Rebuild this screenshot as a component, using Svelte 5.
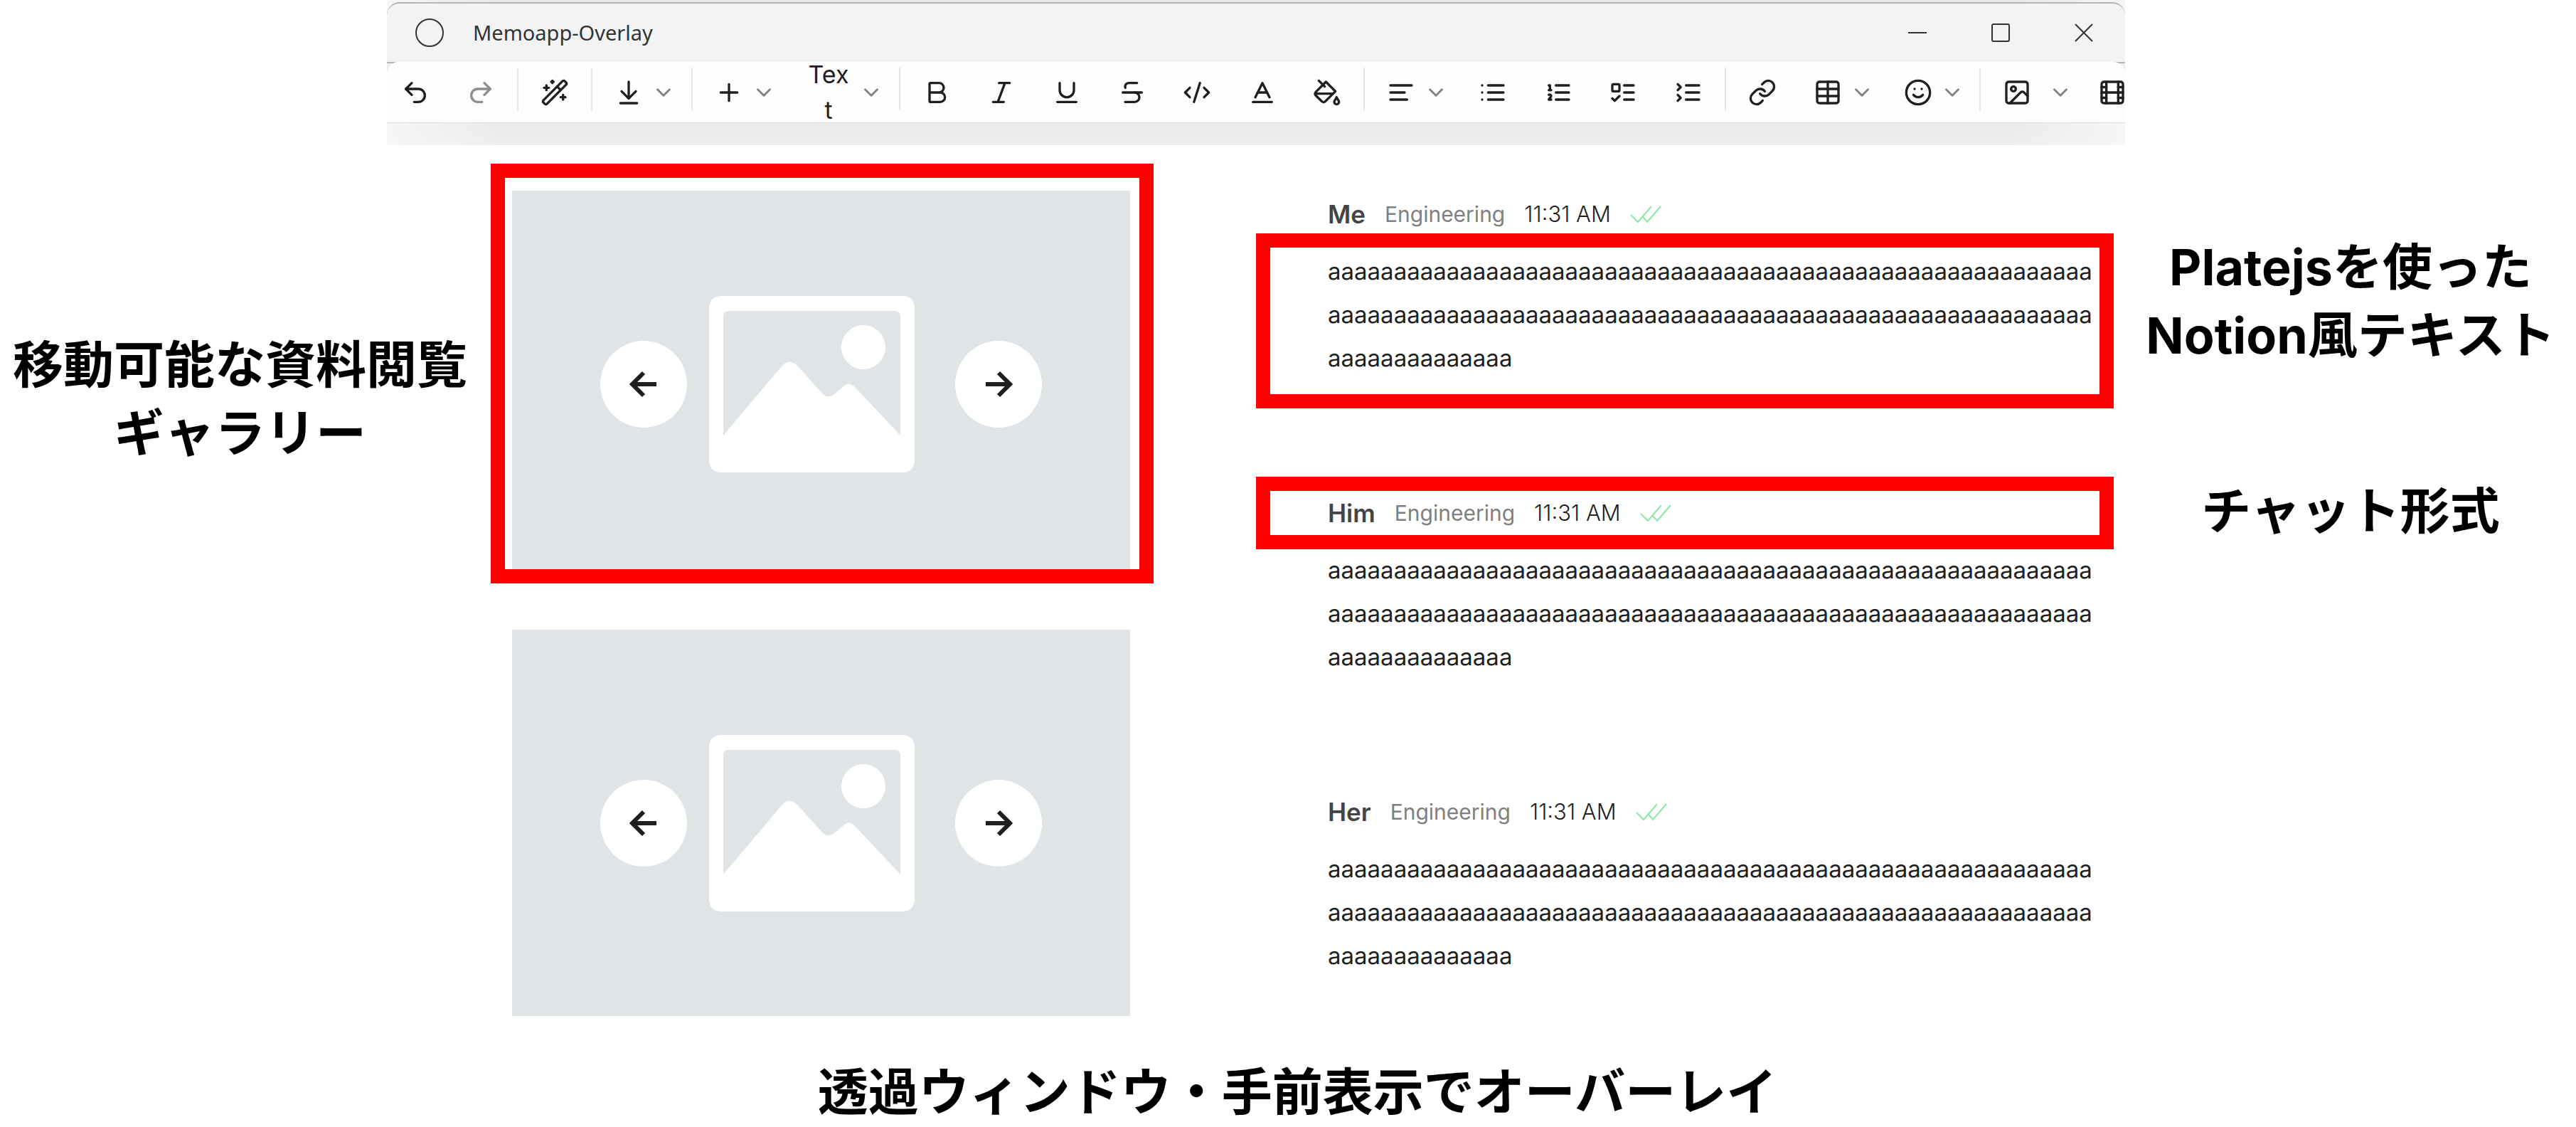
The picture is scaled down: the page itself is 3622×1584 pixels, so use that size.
<script>
  const icons = {
    undo: ['M9 14 4 9l5-5', 'M4 9h10.5a5.5 5.5 0 0 1 0 11H11'],
    redo: ['m15 14 5-5-5-5', 'M20 9H9.5a5.5 5.5 0 0 0 0 11H13'],
    wand: [
      'm21.64 3.64-1.28-1.28a1.21 1.21 0 0 0-1.72 0L2.36 18.64a1.21 1.21 0 0 0 0 1.72l1.28 1.28a1.2 1.2 0 0 0 1.72 0L21.64 5.36a1.2 1.2 0 0 0 0-1.72',
      'm14 7 3 3', 'M5 6v4', 'M19 14v4', 'M10 2v2', 'M7 8H3', 'M21 16h-4', 'M11 3H9'
    ],
    download: ['M12 17V3', 'm6 11 6 6 6-6', 'M19 21H5'],
    plus: ['M5 12h14', 'M12 5v14'],
    chevron: ['m6 9 6 6 6-6'],
    bold: ['M6 12h9a4 4 0 0 1 0 8H7a1 1 0 0 1-1-1V5a1 1 0 0 1 1-1h7a4 4 0 0 1 0 8'],
    italic: ['M19 4h-9', 'M14 20H5', 'M15 4 9 20'],
    underline: ['M6 4v6a6 6 0 0 0 12 0V4', 'M4 20h16'],
    strike: ['M16 4H9a3 3 0 0 0-2.83 4', 'M14 12a4 4 0 0 1 0 8H6', 'M4 12h16'],
    code: ['m18 16 4-4-4-4', 'm6 8-4 4 4 4', 'm14.5 4-5 16'],
    color: ['M4 20h16', 'm6 16 6-12 6 12', 'M8 12h8'],
    bucket: [
      'm19 11-8-8-8.6 8.6a2 2 0 0 0 0 2.8l5.2 5.2c.8.8 2 .8 2.8 0L19 11Z',
      'm5 2 5 5', 'M2 13h15', 'M22 20a2 2 0 1 1-4 0c0-1.6 1.7-2.4 2-4 .3 1.6 2 2.4 2 4Z'
    ],
    align: ['M21 6H3', 'M15 12H3', 'M17 18H3'],
    bullets: ['M8 6h13', 'M8 12h13', 'M8 18h13', 'M3 6h.01', 'M3 12h.01', 'M3 18h.01'],
    numbers: ['M10 6h11', 'M10 12h11', 'M10 18h11', 'M4 6h1v4', 'M4 10h2', 'M6 18H4c0-1 2-2 2-3s-1-1.5-2-1'],
    todo: ['M4 5h4a1 1 0 0 1 1 1v4a1 1 0 0 1-1 1H4a1 1 0 0 1-1-1V6a1 1 0 0 1 1-1Z', 'm3 17 2 2 4-4', 'M13 6h8', 'M13 12h8', 'M13 18h8'],
    toggle: ['m3 10 2.5-2.5L3 5', 'm3 19 2.5-2.5L3 14', 'M10 6h11', 'M10 12h11', 'M10 18h11'],
    link: [
      'M10 13a5 5 0 0 0 7.54.54l3-3a5 5 0 0 0-7.07-7.07l-1.72 1.71',
      'M14 11a5 5 0 0 0-7.54-.54l-3 3a5 5 0 0 0 7.07 7.07l1.71-1.71'
    ],
    table: ['M5 3h14a2 2 0 0 1 2 2v14a2 2 0 0 1-2 2H5a2 2 0 0 1-2-2V5a2 2 0 0 1 2-2Z', 'M12 3v18', 'M3 9h18', 'M3 15h18'],
    emoji: ['M22 12a10 10 0 1 1-20 0a10 10 0 1 1 20 0Z', 'M8 14s1.5 2 4 2 4-2 4-2', 'M9 9h.01', 'M15 9h.01'],
    image: [
      'M5 3h14a2 2 0 0 1 2 2v14a2 2 0 0 1-2 2H5a2 2 0 0 1-2-2V5a2 2 0 0 1 2-2Z',
      'M11 9a2 2 0 1 1-4 0a2 2 0 1 1 4 0Z', 'm21 15-3.086-3.086a2 2 0 0 0-2.828 0L6 21'
    ],
    film: [
      'M5 3h14a2 2 0 0 1 2 2v14a2 2 0 0 1-2 2H5a2 2 0 0 1-2-2V5a2 2 0 0 1 2-2Z',
      'M7 3v18', 'M3 7.5h4', 'M3 12h18', 'M3 16.5h4', 'M17 3v18', 'M17 7.5h4', 'M17 16.5h4'
    ]
  };

  const marks = [
    ['bold', 'Bold'], ['italic', 'Italic'], ['underline', 'Underline'], ['strike', 'Strikethrough'],
    ['code', 'Code'], ['color', 'Text color'], ['bucket', 'Background color']
  ];
  const lists = [
    ['bullets', 'Bulleted list'], ['numbers', 'Numbered list'], ['todo', 'To-do list'], ['toggle', 'Toggle list']
  ];

  const body = 'a'.repeat(130);
  const messages = [
    { name: 'Me', team: 'Engineering', time: '11:31 AM', body, mark: 'text' },
    { name: 'Him', team: 'Engineering', time: '11:31 AM', body, mark: 'head' },
    { name: 'Her', team: 'Engineering', time: '11:31 AM', body, mark: '' }
  ];
  const slides = [{ marked: true }, { marked: false }];
</script>

{#snippet icon(name)}
  <svg class="icon" class:small={name === 'chevron'} viewBox="0 0 24 24" aria-hidden="true">
    {#each icons[name] as d}<path {d} />{/each}
  </svg>
{/snippet}

{#snippet split(name, label)}
  <div class="split">
    <button aria-label={label}>{@render icon(name)}</button>
    <button class="more" aria-label="{label} options">{@render icon('chevron')}</button>
  </div>
{/snippet}

<div class="page">
  <h2 class="caption left">移動可能な資料閲覧<br />ギャラリー</h2>

  <div class="window">
    <div class="chrome">
      <header class="titlebar">
        <svg class="logo" viewBox="0 0 42 42" aria-hidden="true"><circle cx="21" cy="21" r="19" /></svg>
        <h1>Memoapp-Overlay</h1>
        <div class="controls">
          <button aria-label="Minimize"><svg viewBox="0 0 26 26"><path d="M0 13h26" /></svg></button>
          <button aria-label="Maximize"><svg viewBox="0 0 26 26"><rect x="1" y="1" width="24" height="24" rx="2" /></svg></button>
          <button aria-label="Close"><svg viewBox="0 0 26 26"><path d="M1 1l24 24M25 1 1 25" /></svg></button>
        </div>
      </header>

      <div class="toolbar-wrap">
        <div class="toolbar" role="toolbar" aria-label="Formatting">
          <div class="group history">
            <button class="tool" aria-label="Undo">{@render icon('undo')}</button>
            <button class="tool" aria-label="Redo" disabled>{@render icon('redo')}</button>
          </div>
          <div class="group">
            <button class="tool" aria-label="AI commands">{@render icon('wand')}</button>
          </div>
          <div class="group">{@render split('download', 'Export')}</div>
          <div class="group">
            {@render split('plus', 'Insert')}
            <button class="split block" aria-label="Text">
              <span>Text</span>
              <span class="more">{@render icon('chevron')}</span>
            </button>
          </div>
          <div class="group marks">
            {#each marks as [name, label]}
              <button class="tool" aria-label={label}>{@render icon(name)}</button>
            {/each}
          </div>
          <div class="group">
            {@render split('align', 'Align')}
            <div class="lists">
              {#each lists as [name, label]}
                <button class="tool" aria-label={label}>{@render icon(name)}</button>
              {/each}
            </div>
          </div>
          <div class="group tight">
            <button class="tool" aria-label="Link">{@render icon('link')}</button>
            {@render split('table', 'Table')}
            {@render split('emoji', 'Emoji')}
          </div>
          <div class="group media">
            {@render split('image', 'Image')}
            <button class="tool" aria-label="Video">{@render icon('film')}</button>
          </div>
        </div>
      </div>
    </div>

    <main class="content">
      <section class="gallery" aria-label="Gallery">
        {#each slides as slide}
          <div class="slide" class:marked={slide.marked}>
            <button class="nav" aria-label="Previous">
              <svg viewBox="0 0 40 40"><path d="M38 20H5M20 4 4 20l16 16" /></svg>
            </button>
            <svg class="picture" viewBox="0 0 289 248" aria-hidden="true">
              <path
                class="frame"
                fill-rule="evenodd"
                d="M18 0H271Q289 0 289 18V230Q289 248 271 248H18Q0 248 0 230V18Q0 0 18 0ZM28 21Q20 21 20 29V196L102 99Q113 86 125 99L159 137Q168 145 176 138L188 128Q196 119 205 128L269 196V29Q269 21 261 21Z"
              />
              <circle class="frame" cx="217" cy="72" r="31" />
            </svg>
            <button class="nav next" aria-label="Next">
              <svg viewBox="0 0 40 40"><path d="M2 20h33M20 4l16 16-16 16" /></svg>
            </button>
          </div>
        {/each}
      </section>

      <section class="chat" aria-label="Chat">
        {#each messages as message}
          <article>
            <div class="head" class:marked={message.mark === 'head'}>
              <strong>{message.name}</strong>
              <span class="team">{message.team}</span>
              <time>{message.time}</time>
              <svg class="read" viewBox="0 0 44 24" aria-hidden="true">
                <path d="M1 13l10 10L30 1M18 16l6 7L43 1" />
              </svg>
            </div>
            <p class:marked={message.mark === 'text'}>{message.body}</p>
          </article>
        {/each}
      </section>
    </main>
  </div>

  <div class="notes">
    <h2 class="caption">Platejsを使った<br />Notion風テキスト</h2>
    <h2 class="caption">チャット形式</h2>
  </div>

  <h2 class="caption bottom">透過ウィンドウ・手前表示でオーバーレイ</h2>
</div>

<style>
  :global(body) {
    background: #fff;
  }

  .page {
    display: grid;
    grid-template-columns: minmax(0, 544fr) minmax(0, 2444fr) minmax(0, 634fr);
    font-family: Inter, 'Noto Sans CJK JP', sans-serif;
    color: #1f1f1f;
  }

  h1,
  h2,
  p {
    margin: 0;
    font-weight: 400;
  }

  button {
    display: flex;
    align-items: center;
    justify-content: center;
    padding: 0;
    border: 0;
    background: none;
    color: inherit;
    font: inherit;
  }

  .caption {
    color: #000;
    font-size: 71px;
    font-weight: 700;
    line-height: 96px;
    text-align: center;
    white-space: nowrap;
  }

  .caption.left {
    justify-self: start;
    padding: 464px 0 0 18px;
  }

  .caption.bottom {
    grid-column: 1 / -1;
    padding: 58px 0 0 26px;
  }

  .notes {
    display: flex;
    flex-direction: column;
    gap: 151px;
    padding-top: 328px;
  }

  .notes .caption {
    font-size: 70px;
  }

  .chrome {
    overflow: hidden;
    padding: 3px 0 31px;
    background:
      linear-gradient(90deg, #f6f6f6, transparent 160px calc(100% - 160px), #f6f6f6),
      linear-gradient(#e8e8e8 80%, #eee);
  }

  .titlebar {
    display: flex;
    align-items: center;
    box-sizing: border-box;
    height: 84px;
    padding-left: 39px;
    border-top: 2px solid #b5b5b5;
    border-radius: 18px 18px 0 0;
    background: #f3f3f3;
    color: #333;
  }

  .logo {
    width: 42px;
    height: 42px;
    fill: none;
    stroke: #333;
    stroke-width: 2;
  }

  h1 {
    flex: 1;
    margin-left: 40px;
    font-family: 'Noto Sans', sans-serif;
    font-size: 29px;
    line-height: 40px;
  }

  .controls {
    display: flex;
    align-self: stretch;
  }

  .controls button {
    width: 117px;
  }

  .controls svg {
    width: 26px;
    height: 26px;
    fill: none;
    stroke: #333;
    stroke-width: 2;
  }

  .toolbar-wrap {
    background: linear-gradient(#b5b5b5 2px, #ececec 2px);
  }

  .toolbar {
    display: flex;
    align-items: center;
    box-sizing: border-box;
    height: 86px;
    border-bottom: 1px solid #ddd;
    border-radius: 16px 16px 0 0;
    background: #fdfdfd;
  }

  .group {
    display: flex;
    flex: none;
    align-items: center;
  }

  .group + .group::before {
    width: 2px;
    height: 60px;
    margin: 0 5px 10px;
    background: #e6e6e6;
    content: '';
  }

  .history {
    margin-left: -6px;
  }

  .tool {
    flex: none;
    width: 92px;
    height: 84px;
  }

  .tool:disabled {
    opacity: 0.5;
  }

  .marks {
    width: 653px;
  }

  .lists {
    display: flex;
    width: 367px;
  }

  .marks .tool,
  .lists .tool {
    flex: 1;
    width: auto;
  }

  .split {
    display: flex;
    align-items: center;
    gap: 12px;
    padding: 0 17px 0 26px;
  }

  .tight .split {
    gap: 11px;
    padding-right: 16px;
  }

  .media .split {
    gap: 24px;
    padding-right: 10px;
  }

  .block {
    font-size: 34px;
    line-height: 50px;
  }

  .block span:first-child {
    width: 62px;
    word-break: break-all;
  }

  .more {
    display: flex;
    opacity: 0.55;
  }

  .icon {
    flex: none;
    width: 40px;
    height: 40px;
    fill: none;
    stroke: currentColor;
    stroke-width: 2;
    stroke-linecap: round;
    stroke-linejoin: round;
  }

  .icon.small {
    width: 34px;
    height: 34px;
  }

  .content {
    display: grid;
    grid-template-columns: minmax(0, 869fr) minmax(0, 1093fr);
    column-gap: 278px;
    padding: 64px 28px 0 176px;
  }

  .gallery {
    display: flex;
    flex-direction: column;
    gap: 74px;
  }

  .slide {
    display: flex;
    align-items: center;
    justify-content: center;
    height: 543px;
    background: #dfe5e7;
  }

  .marked {
    position: relative;
  }

  .marked::after {
    position: absolute;
    border: 20px solid #f00;
    content: '';
    pointer-events: none;
  }

  .slide.marked::after {
    inset: -38px -33px -9px -30px;
  }

  .nav {
    width: 122px;
    height: 122px;
    border-radius: 50%;
    background: #fff;
  }

  .nav svg {
    width: 40px;
    height: 40px;
    fill: none;
    stroke: #1f1f1f;
    stroke-width: 6;
  }

  .picture {
    width: 289px;
    height: 248px;
    margin: 0 57px 0 31px;
  }

  .frame {
    fill: #fff;
  }

  .chat {
    padding-top: 7px;
  }

  article {
    min-height: 420px;
  }

  article:last-child {
    min-height: 0;
  }

  .head {
    display: flex;
    align-items: center;
    gap: 27px;
    height: 52px;
    margin-bottom: 24px;
    font-size: 30px;
    line-height: 52px;
  }

  .head.marked::after {
    inset: -25px -12px -25px -101px;
  }

  .head strong {
    color: #444;
    font-size: 35px;
    font-weight: 600;
  }

  .team {
    color: #808080;
  }

  time {
    font-size: 31px;
    font-weight: 300;
  }

  .read {
    width: 44px;
    height: 24px;
    fill: none;
    stroke: #8ce8a4;
    stroke-width: 2;
  }

  p {
    padding-right: 12px;
    font-size: 33px;
    line-height: 61px;
    overflow-wrap: anywhere;
  }

  p.marked::after {
    inset: -23px -12px -40px -101px;
  }
</style>
